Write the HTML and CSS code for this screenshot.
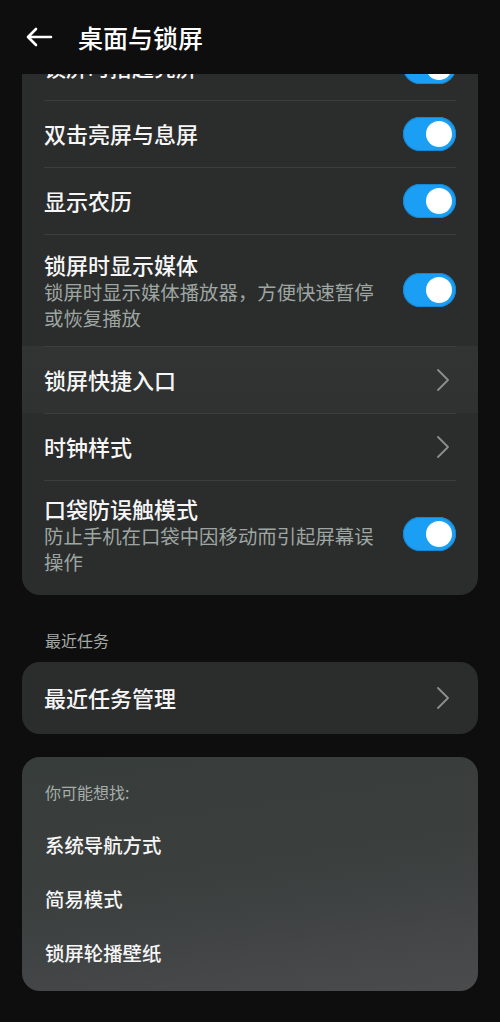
FILE: index.html
```html
<!DOCTYPE html>
<html lang="zh-CN">
<head>
<meta charset="utf-8">
<title>桌面与锁屏</title>
<link rel="stylesheet" href="styles.css">
</head>
<body>
<header class="topbar">
  <svg class="back" width="28" height="24" viewBox="0 0 28 24"><path d="M26 12H3M11 4L3 12L11 20" fill="none" stroke="#fff" stroke-width="2.6" stroke-linecap="round" stroke-linejoin="round"/></svg>
  <h1 class="title">桌面与锁屏</h1>
</header>
<main class="content">
  <section class="card">
    <div class="row first"><div class="row-in"><span class="label">锁屏时抬起亮屏</span><span class="toggle"><span class="knob"></span></span></div></div>
    <div class="row"><div class="row-in"><span class="label">双击亮屏与息屏</span><span class="toggle"><span class="knob"></span></span></div></div>
    <div class="row"><div class="row-in"><span class="label">显示农历</span><span class="toggle"><span class="knob"></span></span></div></div>
    <div class="row"><div class="row-in tall"><div class="texts"><span class="label">锁屏时显示媒体</span><span class="sub">锁屏时显示媒体播放器，方便快速暂停或恢复播放</span></div><span class="toggle"><span class="knob"></span></span></div></div>
    <div class="row hl"><div class="row-in"><span class="label">锁屏快捷入口</span><svg class="chev" width="14" height="22" viewBox="0 0 14 22"><path d="M2 1L12 11L2 21" fill="none" stroke="#8b8e8d" stroke-width="1.8" stroke-linecap="round" stroke-linejoin="round"/></svg></div></div>
    <div class="row"><div class="row-in"><span class="label">时钟样式</span><svg class="chev" width="14" height="22" viewBox="0 0 14 22"><path d="M2 1L12 11L2 21" fill="none" stroke="#8b8e8d" stroke-width="1.8" stroke-linecap="round" stroke-linejoin="round"/></svg></div></div>
    <div class="row"><div class="row-in tall last"><div class="texts"><span class="label">口袋防误触模式</span><span class="sub">防止手机在口袋中因移动而引起屏幕误操作</span></div><span class="toggle"><span class="knob"></span></span></div></div>
  </section>

  <h2 class="section">最近任务</h2>
  <section class="card">
    <div class="row first"><div class="row-in single"><span class="label">最近任务管理</span><svg class="chev" width="14" height="22" viewBox="0 0 14 22"><path d="M2 1L12 11L2 21" fill="none" stroke="#8b8e8d" stroke-width="1.8" stroke-linecap="round" stroke-linejoin="round"/></svg></div></div>
  </section>

  <section class="card suggest">
    <div class="suggest-head">你可能想找:</div>
    <div class="suggest-item">系统导航方式</div>
    <div class="suggest-item">简易模式</div>
    <div class="suggest-item">锁屏轮播壁纸</div>
  </section>
</main>
</body>
</html>
```
FILE: styles.css
```css
* { box-sizing: border-box; }
html, body { margin: 0; padding: 0; }
body {
  background: #0e0e0e;
  font-family: "Noto Sans CJK SC", "Noto Sans", sans-serif;
  color: #f4f4f4;
  width: 500px;
  height: 1022px;
  overflow: hidden;
}
.topbar {
  position: fixed;
  top: 0; left: 0; right: 0;
  height: 74px;
  background: #0e0e0e;
  display: flex;
  align-items: center;
  padding-left: 25px;
  z-index: 10;
}
.back { display: block; margin-right: 25px; }
.title {
  margin: 0;
  font-size: 25px;
  font-weight: 500;
  line-height: 30px;
  color: #fff;
}
.content {
  padding: 34px 22px 0;
}
.card {
  background: #2b2c2c;
  border-radius: 18px;
  overflow: hidden;
}
.row { padding: 0 22px; }
.row.hl { background: linear-gradient(180deg, #313433 0%, #2f3231 100%); }
.row-in {
  display: flex;
  align-items: center;
  justify-content: space-between;
  min-height: 67px;
  border-top: 1px solid #3c3e3d;
}
.row.first .row-in { border-top: none; min-height: 66px; }
.row-in.tall { padding: 13px 0 15px; min-height: 112px; }
.row-in.tall.last { padding: 10px 0 19px; min-height: 115px; }
.row.first .row-in.single { min-height: 72px; }
.label {
  font-size: 22px;
  font-weight: 500;
  line-height: 30px;
  padding-bottom: 3px;
  color: #f6f6f6;
}
.texts { display: flex; flex-direction: column; width: 340px; }
.texts .label { padding-bottom: 0; }
.sub {
  font-size: 19.4px;
  line-height: 25.5px;
  color: #9ea6a2;
}
.toggle {
  flex: none;
  width: 53px;
  height: 34px;
  border-radius: 17px;
  background: #1a9ff4;
  display: flex;
  align-items: center;
  justify-content: flex-end;
  padding-right: 4px;
  box-shadow: inset 0 0 0 1px #1786d2;
}
.knob {
  width: 26px;
  height: 26px;
  border-radius: 50%;
  background: #fff;
}
.chev { display: block; flex: none; margin-right: 6px; }
.section {
  margin: 34px 0 0 23px;
  height: 33px;
  font-size: 16px;
  font-weight: 400;
  line-height: 22px;
  color: #a3aaa6;
}
.suggest {
  margin-top: 23px;
  background: linear-gradient(172deg, #373d3b 0%, #3b3f3e 50%, #4a4b4d 100%);
  padding: 23px 23px 11px;
}
.suggest-head {
  font-size: 16px;
  line-height: 24px;
  color: #a6ada9;
  margin-bottom: 14px;
}
.suggest-item {
  font-size: 19.4px;
  font-weight: 500;
  line-height: 54px;
  color: #f6f6f6;
}
```
